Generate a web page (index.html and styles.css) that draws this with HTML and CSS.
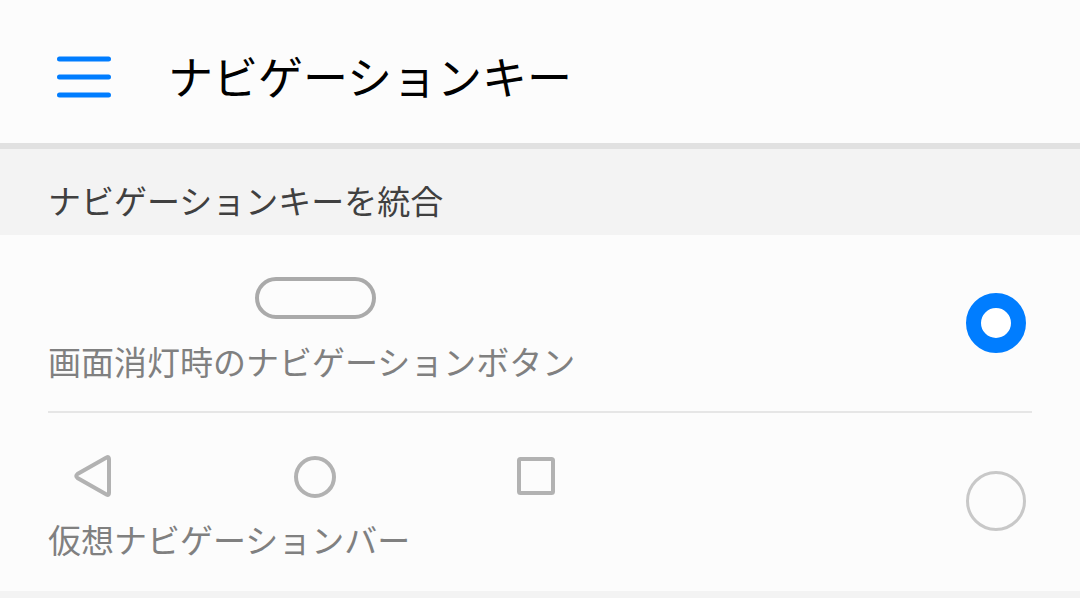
FILE: index.html
```
<!DOCTYPE html>
<html lang="ja">
<head>
  <meta charset="UTF-8">
  <meta name="viewport" content="width=device-width, initial-scale=1">
  <title>ナビゲーションキー</title>
  <link rel="stylesheet" href="styles.css">
</head>
<body>
  <header class="app-bar">
    <button class="menu-btn" type="button" aria-label="メニュー">
      <svg width="56" height="44" viewBox="0 0 56 44">
        <path d="M3.500 5H52.500M3.500 23H52.500M3.500 41H52.500"/>
      </svg>
    </button>
    <h1>ナビゲーションキー</h1>
  </header>

  <main>
    <h2 class="section-title">ナビゲーションキーを統合</h2>
    <div class="options">
      <label class="option">
        <span class="option-body">
          <span class="keys single">
            <svg width="122" height="42" viewBox="0 0 122 42">
              <rect x="3" y="2" width="117" height="38" rx="19"/>
            </svg>
          </span>
          <span class="option-text">画面消灯時のナビゲーションボタン</span>
        </span>
        <input type="radio" name="navkey" value="button" checked>
      </label>
      <label class="option">
        <span class="option-body">
          <span class="keys">
            <svg width="42" height="42" viewBox="0 0 42 42">
              <path d="M37 4V38Q37 41 34.500 39.500L5.500 23Q3 21 5.500 19L34.500 2.500Q37 1 37 4Z"/>
            </svg>
            <svg width="42" height="42" viewBox="0 0 42 42">
              <circle cx="21" cy="22" r="19"/>
            </svg>
            <svg width="42" height="42" viewBox="0 0 42 42">
              <rect x="3" y="4" width="34" height="34" rx="1.500"/>
            </svg>
          </span>
          <span class="option-text">仮想ナビゲーションバー</span>
        </span>
        <input type="radio" name="navkey" value="bar">
      </label>
    </div>
  </main>
</body>
</html>
```
FILE: styles.css
```
:root {
  --bg: #fcfcfc;
  --band: #f3f3f3;
  --primary: #007dff;
  --icon: #b2b2b2;
  --icon-dark: #aaaaaa;
}

* {
  box-sizing: border-box;
}
body {
  margin: 0;
  background: var(--band);
  font-family: "Noto Sans CJK JP", sans-serif;
}
.app-bar {
  display: flex;
  align-items: center;
  gap: 56px;
  padding: 40px 56px 31px;
  background: var(--bg);
  border-bottom: 6px solid #e1e1e1;
}
.menu-btn {
  display: flex;
  padding: 0;
  border: none;
  background: none;
  cursor: pointer;
}
.menu-btn svg {
  fill: none;
  stroke: var(--primary);
  stroke-width: 5;
  stroke-linecap: round;
}
h1 {
  margin: 0;
  font-size: 45px;
  font-weight: 400;
  line-height: 72px;
  color: #000;
}
.section-title {
  margin: 0;
  padding: 27px 48px 11px;
  font-size: 33px;
  font-weight: 400;
  line-height: 48px;
  color: #404040;
}
.options {
  padding: 0 48px 2px;
  background: var(--bg);
}
.option {
  display: flex;
  align-items: center;
  justify-content: space-between;
  padding-right: 6px;
  cursor: pointer;
}
.option + .option {
  border-top: 2px solid #e6e6e6;
}
.option-body {
  display: flex;
  flex-direction: column;
  gap: 18px;
  padding: 42px 0 26px;
}
.keys {
  display: flex;
  justify-content: space-between;
  width: 534px;
  padding: 0 24px;
}
.keys svg {
  overflow: visible;
  fill: none;
  stroke: var(--icon);
  stroke-width: 4;
}
.keys.single {
  justify-content: center;
}
.keys.single svg {
  stroke: var(--icon-dark);
}
.option-text {
  font-size: 33px;
  line-height: 48px;
  color: #808080;
}
input[type="radio"] {
  appearance: none;
  flex: none;
  width: 60px;
  height: 60px;
  margin: 0;
  border: 3px solid #c8c8c8;
  border-radius: 50%;
}
input[type="radio"]:checked {
  border: 15px solid var(--primary);
  background: #fff;
}
```
